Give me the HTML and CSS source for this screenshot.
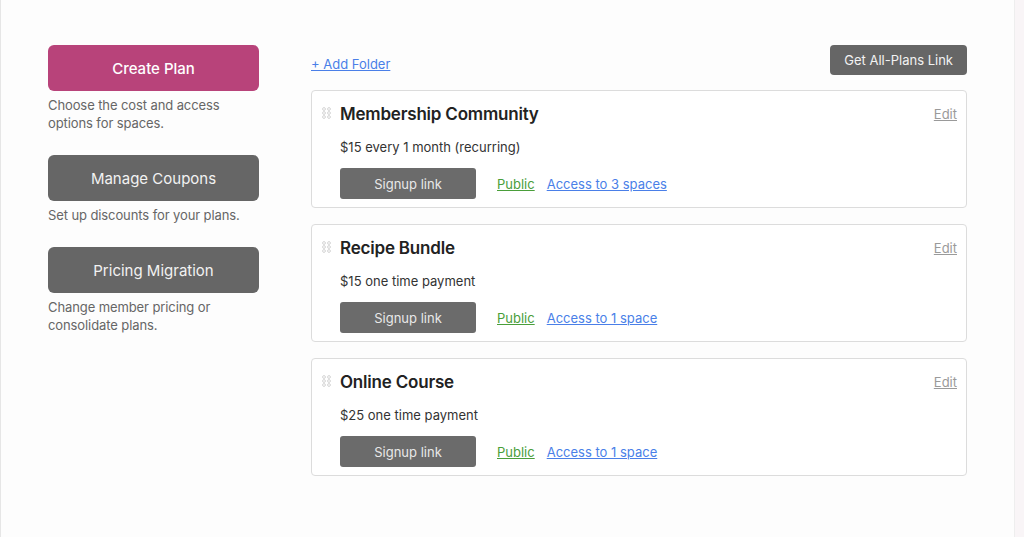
FILE: index.html
```html
<!DOCTYPE html>
<html lang="en">
<head>
    <meta charset="UTF-8">
    <meta name="viewport" content="width=device-width, initial-scale=1.0">
    <title>Plans</title>
    <link rel="stylesheet" href="styles.css">
</head>
<body>
    <div class="page">
        <div class="content">
            <aside class="sidebar">
                <div class="side-item">
                    <button class="side-button primary">Create Plan</button>
                    <p class="side-note">Choose the cost and access options for spaces.</p>
                </div>
                <div class="side-item">
                    <button class="side-button">Manage Coupons</button>
                    <p class="side-note">Set up discounts for your plans.</p>
                </div>
                <div class="side-item">
                    <button class="side-button">Pricing Migration</button>
                    <p class="side-note">Change member pricing or consolidate plans.</p>
                </div>
            </aside>

            <main class="plans">
                <div class="plans-top">
                    <a href="#" class="add-folder">+ Add Folder</a>
                    <button class="all-plans">Get All-Plans Link</button>
                </div>

                <div class="plan-card">
                    <div class="plan-head">
                        <svg class="handle" width="9" height="12" viewBox="0 0 9 12"><g fill="none" stroke="#d4d4d4" stroke-width="1"><circle cx="2" cy="2" r="1.4"/><circle cx="7" cy="2" r="1.4"/><circle cx="2" cy="6" r="1.4"/><circle cx="7" cy="6" r="1.4"/><circle cx="2" cy="10" r="1.4"/><circle cx="7" cy="10" r="1.4"/></g></svg>
                        <h2 class="plan-title">Membership Community</h2>
                        <a href="#" class="edit">Edit</a>
                    </div>
                    <div class="plan-body">
                        <p class="price">$15 every 1 month (recurring)</p>
                        <div class="plan-actions">
                            <button class="signup">Signup link</button>
                            <a href="#" class="public">Public</a>
                            <a href="#" class="access">Access to 3 spaces</a>
                        </div>
                    </div>
                </div>

                <div class="plan-card">
                    <div class="plan-head">
                        <svg class="handle" width="9" height="12" viewBox="0 0 9 12"><g fill="none" stroke="#d4d4d4" stroke-width="1"><circle cx="2" cy="2" r="1.4"/><circle cx="7" cy="2" r="1.4"/><circle cx="2" cy="6" r="1.4"/><circle cx="7" cy="6" r="1.4"/><circle cx="2" cy="10" r="1.4"/><circle cx="7" cy="10" r="1.4"/></g></svg>
                        <h2 class="plan-title">Recipe Bundle</h2>
                        <a href="#" class="edit">Edit</a>
                    </div>
                    <div class="plan-body">
                        <p class="price">$15 one time payment</p>
                        <div class="plan-actions">
                            <button class="signup">Signup link</button>
                            <a href="#" class="public">Public</a>
                            <a href="#" class="access">Access to 1 space</a>
                        </div>
                    </div>
                </div>

                <div class="plan-card">
                    <div class="plan-head">
                        <svg class="handle" width="9" height="12" viewBox="0 0 9 12"><g fill="none" stroke="#d4d4d4" stroke-width="1"><circle cx="2" cy="2" r="1.4"/><circle cx="7" cy="2" r="1.4"/><circle cx="2" cy="6" r="1.4"/><circle cx="7" cy="6" r="1.4"/><circle cx="2" cy="10" r="1.4"/><circle cx="7" cy="10" r="1.4"/></g></svg>
                        <h2 class="plan-title">Online Course</h2>
                        <a href="#" class="edit">Edit</a>
                    </div>
                    <div class="plan-body">
                        <p class="price">$25 one time payment</p>
                        <div class="plan-actions">
                            <button class="signup">Signup link</button>
                            <a href="#" class="public">Public</a>
                            <a href="#" class="access">Access to 1 space</a>
                        </div>
                    </div>
                </div>
            </main>
        </div>
        <div class="side-strip"></div>
    </div>
</body>
</html>
```

FILE: styles.css
```css
body {
    margin: 0;
    font-family: Inter, "Open Sans", sans-serif;
    background-color: #fdfdfd;
    color: #333;
}
.page {
    display: flex;
    min-height: 537px;
    border-left: 1px solid #e6e6e6;
    box-sizing: border-box;
}
.content {
    flex: 1;
    display: flex;
    gap: 52px;
    padding: 45px 0 0 47px;
}
.side-strip {
    width: 9px;
    background-color: #f9f5f7;
    border-left: 1px solid #eee;
}
.sidebar {
    width: 211px;
    display: flex;
    flex-direction: column;
    gap: 23px;
}
.side-button {
    display: block;
    width: 100%;
    height: 46px;
    border: none;
    border-radius: 6px;
    background-color: #666;
    color: #f2f2f2;
    font-family: inherit;
    font-size: 15px;
    cursor: pointer;
}
.side-button.primary {
    background-color: #b8437a;
    color: #fff;
    font-weight: 500;
}
.side-note {
    margin: 5px 0 0;
    font-size: 13px;
    line-height: 18px;
    color: #666;
    letter-spacing: -0.1px;
}
.plans {
    width: 656px;
}
.plans-top {
    display: flex;
    justify-content: space-between;
    align-items: flex-end;
    margin-bottom: 15px;
}
.add-folder {
    font-size: 13px;
    line-height: 20px;
    color: #4a7fe8;
    margin-bottom: 1px;
}
.all-plans {
    height: 30px;
    padding: 0 14px;
    border: none;
    border-radius: 4px;
    background-color: #666;
    color: #f2f2f2;
    font-family: inherit;
    font-size: 13px;
    cursor: pointer;
}
.plan-card {
    border: 1px solid #dcdcdc;
    border-radius: 4px;
    background-color: #fff;
    padding: 11px 9px 8px 10px;
    margin-bottom: 16px;
}
.plan-head {
    display: flex;
    align-items: center;
    height: 24px;
}
.handle {
    margin-right: 9px;
    margin-top: -2px;
}
.plan-title {
    flex: 1;
    margin: 0;
    font-size: 17px;
    font-weight: 600;
    color: #222;
    letter-spacing: -0.2px;
}
.edit {
    font-size: 13px;
    color: #9a9a9a;
}
.plan-body {
    padding-left: 18px;
}
.price {
    margin: 11px 0 0;
    font-size: 13px;
    line-height: 20px;
    color: #333;
}
.plan-actions {
    display: flex;
    align-items: center;
    margin-top: 11px;
}
.signup {
    width: 136px;
    height: 31px;
    border: none;
    border-radius: 3px;
    background-color: #6b6b6b;
    color: #e8e8e8;
    font-family: inherit;
    font-size: 13px;
    margin-right: 21px;
    cursor: pointer;
}
.public {
    font-size: 13px;
    color: #4a9e3a;
    margin-right: 12px;
}
.access {
    font-size: 13px;
    color: #4a7fe8;
}
```
